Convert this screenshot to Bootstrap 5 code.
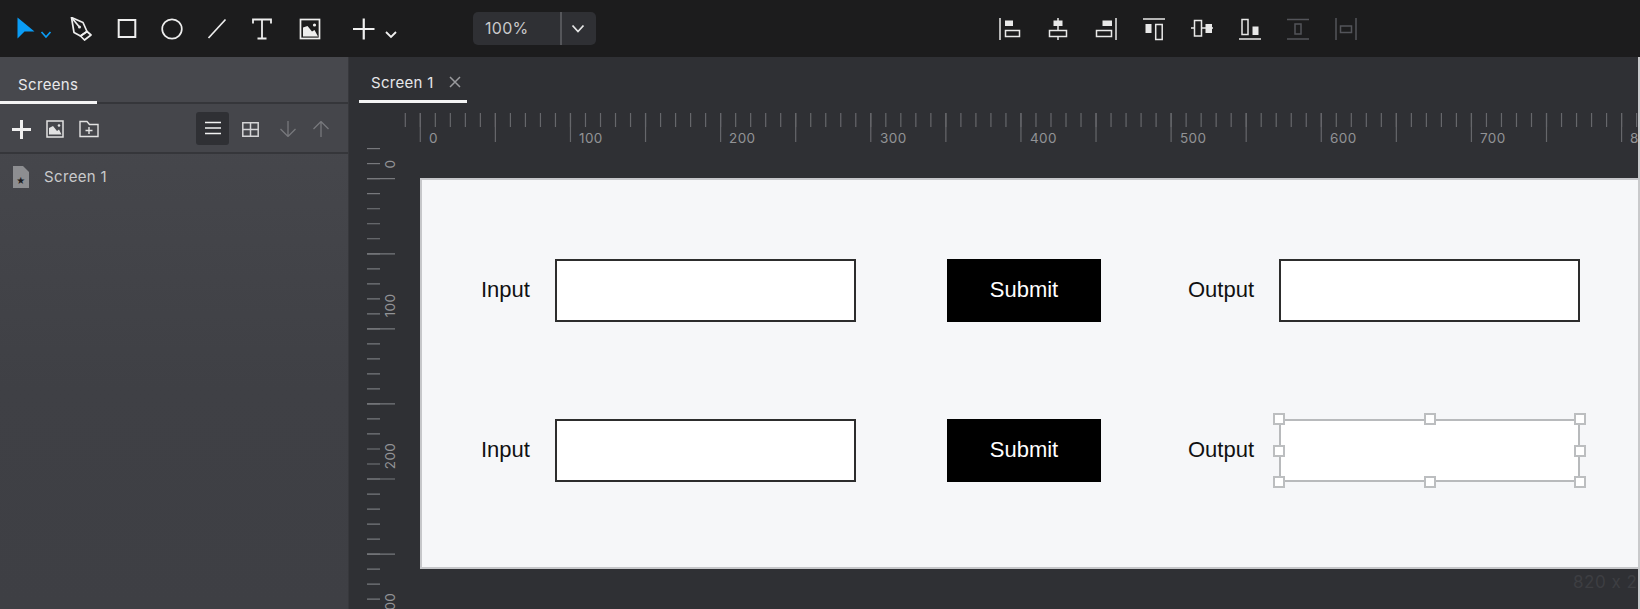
<!doctype html>
<html lang="en">
<head>
<meta charset="utf-8">
<title>Screen 1</title>
<link rel="stylesheet" href="https://cdn.jsdelivr.net/npm/bootstrap@5.3.0/dist/css/bootstrap.min.css">
<style>
html,body{height:100%;overflow:hidden}
body{background:#2f3034;font-family:Inter,"Noto Sans",sans-serif;color:#d8d8da}
svg{display:block;flex:none}
.tool-bar{height:57px;background:#1c1c1d}
.tool-left{width:473px}
.tool-cell{width:45px;height:57px;padding:0;border:0;background:none}
.tool-first{width:58px;padding-left:17px}
.tool-pen{width:46px}
.tool-img{width:52px}
.tool-plus{width:44px;padding-left:17px}
.zoom-box{width:123px;height:33px;border-radius:5px;background:#2f3034;font-size:16px;letter-spacing:.3px;color:#c9c9cb}
.zoom-val{width:89px;padding-left:12px;height:33px;line-height:33px;border-right:2px solid #55565a}
.zoom-arrow{width:32px}
.align-group{margin-left:402px;gap:24px}
.work{height:552px}
.side-pane{width:349px;background:linear-gradient(#48494e,#3f4045 60%,#3e3f44);border-right:1px solid #37383c}
.side-tabs{height:47px;border-bottom:2px solid #35363a;background:#47484d}
.side-tab{width:97px;height:47px;margin-bottom:-2px;padding:19px 0 0 18px;border-bottom:3px solid #f4f4f4;font-size:15px;line-height:17px;letter-spacing:.35px;color:#e8e8ea}
.side-tools{height:50px;border-bottom:2px solid #35363a;padding:2px 0 0 12px;background:#45464b}
.mini-btn{width:33px;height:33px;margin-top:-2px;border-radius:3px;background:#2f3034}
.screen-row{height:46px;padding-left:13px;font-size:15px;letter-spacing:.35px;color:#c9cacc}
.screen-name{margin-left:15px}
.ico-img{margin-left:15px}
.ico-folder{margin-left:15px}
.btn-list{margin-left:97px}
.ico-grid{margin-left:13px}
.ico-down{margin-left:21px}
.ico-up{margin-left:17px}
.main-pane{width:1289px;background:#2f3034}
.right-strip{width:2px;background:#c9cacc}
.doc-tabs{height:46px;padding-left:10px}
.doc-tab{width:108px;height:46px;padding:17px 0 0 12px;border-bottom:3px solid #f4f4f4;font-size:15px;line-height:17px;letter-spacing:.3px;color:#e6e6e8}
.doc-close{margin-left:15px;margin-top:2px}
.ruler-text{font-family:Inter,"Noto Sans",sans-serif;font-size:13.5px;letter-spacing:.4px;fill:#929396}
.stage{height:391px;background:#f6f7f9;border:2px solid #c6c7ca;border-right:0;padding:79px 0 0 59px;gap:97px;font-family:"Liberation Sans",Arial,sans-serif;font-size:22px;color:#111}
.stage-row{height:63px}
.lbl-in{width:74px;margin-top:-2px}
.lbl-out{width:91px;margin-top:-2px}
.in-box{width:301px;height:63px;background:#fff;border:2px solid #2d2d2d}
.sub-btn{width:154px;height:63px;margin:0 87px 0 91px;background:#000;color:#fff;line-height:61px;text-align:center}
.in-box-sel{border-color:#b8babc}
.grip-frame{inset:-2px}
.grip{width:12px;height:12px;background:#fff;border:2px solid #bcbec0}
.size-note{right:0;top:513px;width:65px;overflow:hidden;white-space:nowrap;font-size:17px;color:#3d3e42;letter-spacing:.5px}
</style>
</head>
<body>
<div class="d-flex flex-column vh-100">
  <nav class="tool-bar d-flex align-items-center">
    <div class="tool-left d-flex align-items-center">
      <button class="tool-cell tool-first d-flex align-items-center" aria-label="Select">
        <svg width="36" height="24" viewBox="0 0 36 24"><path d="M.5 .5 17.500 14.500 H7.500 L.5 21.500Z" fill="#0a9cf5"/><path d="M24.500 15 29 20 33.500 15" fill="none" stroke="#0a9cf5" stroke-width="1.700"/></svg>
      </button>
      <button class="tool-cell tool-pen d-flex align-items-center justify-content-center" aria-label="Pen">
        <svg width="24" height="24" viewBox="0 0 24 24" fill="none" stroke="#eee" stroke-width="1.700" stroke-linejoin="round"><path d="M2.500 .5 14 5.500 18 14.500 11.500 19 5 15.500Z"/><path d="M11.500 19 18 14.500 22 18 15.500 23Z"/><path d="M2.500 .5 10 9.500"/><circle cx="10.500" cy="10" r="1.500" fill="#eee" stroke="none"/></svg>
      </button>
      <button class="tool-cell d-flex align-items-center justify-content-center" aria-label="Rectangle">
        <svg width="24" height="24" viewBox="0 0 24 24"><rect x="3.700" y="3" width="16.600" height="17" fill="none" stroke="#eee" stroke-width="2"/></svg>
      </button>
      <button class="tool-cell d-flex align-items-center justify-content-center" aria-label="Ellipse">
        <svg width="24" height="24" viewBox="0 0 24 24"><ellipse cx="12" cy="12" rx="9.800" ry="9.700" fill="none" stroke="#eee" stroke-width="1.700"/></svg>
      </button>
      <button class="tool-cell d-flex align-items-center justify-content-center" aria-label="Line">
        <svg width="24" height="24" viewBox="0 0 24 24"><path d="M3.500 21 20.500 2.500" stroke="#eee" stroke-width="1.700"/></svg>
      </button>
      <button class="tool-cell d-flex align-items-center justify-content-center" aria-label="Text">
        <svg width="24" height="24" viewBox="0 0 24 24" fill="none" stroke="#eee" stroke-width="1.800"><path d="M3 6.500V2.500H21V6.500M12 2.500V21.500M7.500 21.500H16.500"/></svg>
      </button>
      <button class="tool-cell tool-img d-flex align-items-center justify-content-center" aria-label="Image">
        <svg width="24" height="24" viewBox="0 0 24 24"><rect x="2.500" y="2.500" width="19" height="19" fill="none" stroke="#eee" stroke-width="1.700"/><path d="M5 19.500V10.500L9.500 9 14 14.500 16.500 13 20 19.500Z" fill="#eee"/><circle cx="16.500" cy="8" r="1.600" fill="#eee"/></svg>
      </button>
      <button class="tool-cell tool-plus d-flex align-items-center" aria-label="Add">
        <svg width="44" height="24" viewBox="0 0 44 24" fill="none" stroke="#f0f0f0"><path d="M0 12H21.500M10.750 1.500V22.500" stroke-width="2.200"/><path d="M33 15 38 20 43 15" stroke-width="1.800"/></svg>
      </button>
    </div>
    <div class="zoom-box d-flex align-items-center">
      <div class="zoom-val">100%</div>
      <div class="zoom-arrow d-flex justify-content-center">
        <svg width="14" height="9" viewBox="0 0 14 9"><path d="M1.500 1.500 7 7.500 12.500 1.500" fill="none" stroke="#e6e6e6" stroke-width="1.800"/></svg>
      </div>
    </div>
    <div class="align-group d-flex align-items-center">
      <svg width="24" height="24" viewBox="0 0 24 24" fill="none" stroke="#e8e8e8" stroke-width="1.500"><path d="M2 1V23"/><rect x="7" y="3.500" width="8" height="5.500" fill="#e8e8e8" stroke="none"/><rect x="7.500" y="13.500" width="14" height="6"/></svg>
      <svg width="24" height="24" viewBox="0 0 24 24" fill="none" stroke="#e8e8e8" stroke-width="1.500"><path d="M12 1V23"/><rect x="7.500" y="3.500" width="9" height="5.500" fill="#e8e8e8" stroke="none"/><rect x="3.500" y="13.500" width="17" height="6" fill="#1c1c1d"/></svg>
      <svg width="24" height="24" viewBox="0 0 24 24" fill="none" stroke="#e8e8e8" stroke-width="1.500"><path d="M22 1V23"/><rect x="8.500" y="3.500" width="9.500" height="5.500" fill="#e8e8e8" stroke="none"/><rect x="2.500" y="13.500" width="15" height="6"/></svg>
      <svg width="24" height="24" viewBox="0 0 24 24" fill="none" stroke="#e8e8e8" stroke-width="1.500"><path d="M1 2H23"/><rect x="3.500" y="7" width="6" height="9" fill="#e8e8e8" stroke="none"/><rect x="13.700" y="7.500" width="6.500" height="15"/></svg>
      <svg width="24" height="24" viewBox="0 0 24 24" fill="none" stroke="#e8e8e8" stroke-width="1.500"><path d="M1 11H23"/><rect x="4.500" y="3.500" width="7" height="15.500" fill="#1c1c1d"/><rect x="15.500" y="7" width="6.500" height="9" fill="#e8e8e8" stroke="none"/></svg>
      <svg width="24" height="24" viewBox="0 0 24 24" fill="none" stroke="#e8e8e8" stroke-width="1.500"><path d="M1 22H23"/><rect x="4" y="2.500" width="6" height="15"/><rect x="14.500" y="9.500" width="6" height="8.500" fill="#e8e8e8" stroke="none"/></svg>
      <svg width="24" height="24" viewBox="0 0 24 24" fill="none" stroke="#53545a" stroke-width="1.500"><path d="M1 2.500H23M1 22H23"/><rect x="9" y="7" width="6" height="10"/></svg>
      <svg width="24" height="24" viewBox="0 0 24 24" fill="none" stroke="#53545a" stroke-width="1.500"><path d="M2 1V23M22 1V23"/><rect x="6.500" y="9" width="11" height="6.500"/></svg>
    </div>
  </nav>
  <div class="work d-flex">
    <aside class="side-pane d-flex flex-column">
      <div class="side-tabs"><div class="side-tab">Screens</div></div>
      <div class="side-tools d-flex align-items-center">
        <svg width="19" height="19" viewBox="0 0 19 19"><path d="M0 9.500H19M9.500 0V19" stroke="#f0f0f0" stroke-width="3"/></svg>
        <svg class="ico-img" width="18" height="18" viewBox="0 0 18 18"><rect x="1" y="1" width="16" height="16" fill="none" stroke="#e2e2e2" stroke-width="1.500"/><path d="M3 14.500V8L7 6 11 11 13 9.500 15.500 14.500Z" fill="#e2e2e2"/><circle cx="13" cy="5.500" r="1.300" fill="#e2e2e2"/></svg>
        <svg class="ico-folder" width="20" height="18" viewBox="0 0 20 18" fill="none" stroke="#e2e2e2" stroke-width="1.400"><path d="M1 16.500V1.500H8L10.500 4.500H19V16.500ZM10 7V14M6.500 10.500H13.500"/></svg>
        <div class="mini-btn btn-list d-flex align-items-center justify-content-center">
          <svg width="16" height="14" viewBox="0 0 16 14"><path d="M0 1.500H16M0 7H16M0 12.500H16" stroke="#f2f2f2" stroke-width="1.600"/></svg>
        </div>
        <svg class="ico-grid" width="17" height="15" viewBox="0 0 17 15" fill="none" stroke="#d4d4d6" stroke-width="1.500"><path d="M.8.8H16.200V14.200H.8ZM8.500.8V14.200M.8 7.500H16.200"/></svg>
        <svg class="ico-down" width="16" height="16" viewBox="0 0 16 16" fill="none" stroke="#77787c" stroke-width="1.300"><path d="M8 0V15.500M.5 8 8 15.500 15.500 8"/></svg>
        <svg class="ico-up" width="16" height="16" viewBox="0 0 16 16" fill="none" stroke="#77787c" stroke-width="1.300"><path d="M8 16V.5M.5 8 8 .5 15.500 8"/></svg>
      </div>
      <div class="screen-row d-flex align-items-center">
        <svg width="16" height="22" viewBox="0 0 16 22"><path d="M0 0H10L16 6V22H0Z" fill="#8d8e91"/><text x="8" y="18" text-anchor="middle" font-size="10" fill="#1d1d1f" font-family="DejaVu Sans">★</text></svg>
        <span class="screen-name">Screen 1</span>
      </div>
    </aside>
    <main class="main-pane d-flex flex-column position-relative">
      <div class="doc-tabs">
        <div class="doc-tab d-flex">
          <span>Screen 1</span>
          <svg class="doc-close" width="12" height="12" viewBox="0 0 12 12"><path d="M1 1 11 11M11 1 1 11" stroke="#9a9b9e" stroke-width="1.500"/></svg>
        </div>
      </div>
      <svg width="1289" height="75" viewBox="0 0 1289 75">
        <path d="M55.700 17H1289" stroke="#66676b" stroke-width="14" stroke-dasharray="1.200 13.816"/>
        <path d="M70.700 24.500H1289" stroke="#66676b" stroke-width="29" stroke-dasharray="1.200 73.880"/>
        <g fill="#77787c"><rect x="18" y="45" width="13" height="1.200"/><rect x="18" y="60" width="13" height="1.200"/></g>
        <g class="ruler-text">
          <text x="80" y="40">0</text><text x="230" y="40">100</text><text x="380" y="40">200</text><text x="531" y="40">300</text><text x="681" y="40">400</text><text x="831" y="40">500</text><text x="981" y="40">600</text><text x="1131" y="40">700</text><text x="1281" y="40">800</text>
          <text transform="translate(46 61) rotate(-90)" text-anchor="middle">0</text>
        </g>
      </svg>
      <div class="d-flex flex-grow-1">
        <svg width="71" height="431" viewBox="0 0 71 431">
          <path d="M24.500 .1V431" stroke="#77787c" stroke-width="13" stroke-dasharray="1.200 13.816"/>
          <path d="M32 .1V431" stroke="#77787c" stroke-width="28" stroke-dasharray="1.200 73.880"/>
          <g class="ruler-text">
            <text transform="translate(46 127.500) rotate(-90)" text-anchor="middle">100</text>
            <text transform="translate(46 278) rotate(-90)" text-anchor="middle">200</text>
            <text transform="translate(46 428) rotate(-90)" text-anchor="middle">300</text>
          </g>
        </svg>
        <div class="flex-grow-1">
          <div class="stage d-flex flex-column">
            <div class="stage-row d-flex align-items-center">
              <div class="lbl-in">Input</div>
              <div class="in-box"></div>
              <div class="sub-btn">Submit</div>
              <div class="lbl-out">Output</div>
              <div class="in-box"></div>
            </div>
            <div class="stage-row d-flex align-items-center">
              <div class="lbl-in">Input</div>
              <div class="in-box"></div>
              <div class="sub-btn">Submit</div>
              <div class="lbl-out">Output</div>
              <div class="in-box in-box-sel position-relative">
                <div class="grip-frame position-absolute">
                  <span class="grip position-absolute top-0 start-0 translate-middle"></span>
                  <span class="grip position-absolute top-0 start-50 translate-middle"></span>
                  <span class="grip position-absolute top-0 start-100 translate-middle"></span>
                  <span class="grip position-absolute top-50 start-0 translate-middle"></span>
                  <span class="grip position-absolute top-50 start-100 translate-middle"></span>
                  <span class="grip position-absolute top-100 start-0 translate-middle"></span>
                  <span class="grip position-absolute top-100 start-50 translate-middle"></span>
                  <span class="grip position-absolute top-100 start-100 translate-middle"></span>
                </div>
              </div>
            </div>
          </div>
        </div>
      </div>
      <div class="size-note position-absolute">820 x 260</div>
    </main>
    <div class="right-strip"></div>
  </div>
</div>
<script src="https://cdn.jsdelivr.net/npm/bootstrap@5.3.0/dist/js/bootstrap.bundle.min.js"></script>
</body>
</html>
